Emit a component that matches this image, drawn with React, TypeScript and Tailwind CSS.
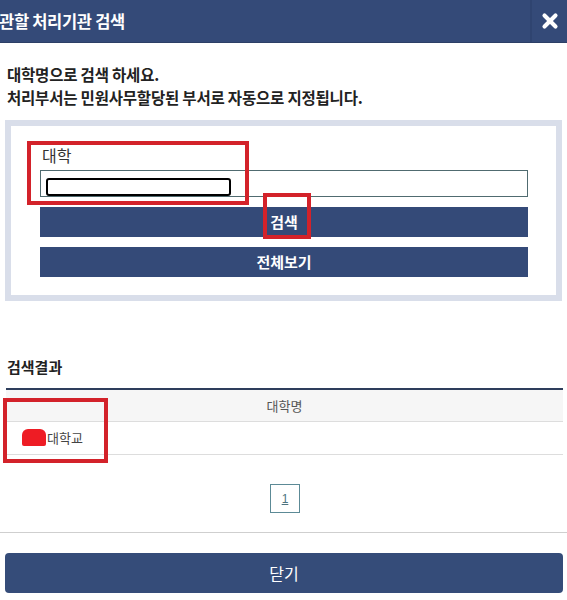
import { X } from 'lucide-react';

export default function App() {
  return (
    <div className="relative w-[567px] h-[600px] bg-white overflow-hidden font-['Noto_Sans_CJK_KR','Noto_Sans',sans-serif] text-[#222]">
      {/* 헤더 */}
      <div className="h-[43px] bg-[#344a78] flex items-center justify-between border-b border-[#2c3f66]">
        <h1 className="text-white text-[16.5px] font-bold tracking-[-0.3px] pl-0 -ml-[1px]">관할 처리기관 검색</h1>
        <div className="h-full flex items-center">
          <div className="h-full w-[2px] bg-[#2f4470]" />
          <button className="w-[35px] h-full flex items-center justify-center text-white">
            <X size={22} strokeWidth={4.5} />
          </button>
        </div>
      </div>

      {/* 안내문 */}
      <div className="pt-[20px] pl-[7px] text-[15.5px] font-bold leading-[23px] tracking-[-0.2px]">
        <p>대학명으로 검색 하세요.</p>
        <p>처리부서는 민원사무할당된 부서로 자동으로 지정됩니다.</p>
      </div>

      {/* 검색 박스 */}
      <div className="ml-[5px] mt-[11px] w-[557px] border-[6px] border-[#d9deea] pl-[29px] pr-[28px] pt-[19px] pb-[18px]">
        <label className="block text-[16px] leading-[20px] text-[#333] pl-[2px]">대학</label>
        <input className="mt-[5px] block w-full h-[27px] border border-[#506b70] outline-none" />
        <button className="mt-[10px] w-full h-[30px] bg-[#344a78] text-white text-[15px] font-bold">검색</button>
        <button className="mt-[10px] w-full h-[30px] bg-[#344a78] text-white text-[15px] font-bold">전체보기</button>
      </div>

      {/* 검색결과 */}
      <h2 className="mt-[56px] pl-[7px] text-[15px] font-bold leading-[20px]">검색결과</h2>
      <div className="ml-[6px] mt-[11px] w-[557px] border-t-2 border-[#2e3e5c]">
        <div className="h-[32px] bg-[#f6f6f6] border-b border-[#dddddd] flex items-center justify-center text-[13px] text-[#555]">
          대학명
        </div>
        <div className="h-[33px] border-b border-[#dddddd] flex items-center pl-[41px] text-[13px] text-[#444]">
          대학교
        </div>
      </div>

      {/* 페이지 */}
      <div className="mt-[29px] flex justify-center pl-[3px]">
        <span className="w-[30px] h-[29px] border border-[#5c8a96] flex items-center justify-center text-[12px] text-[#4d7380] underline font-['Liberation_Sans',sans-serif]">
          1
        </span>
      </div>

      <hr className="mt-[19px] border-t border-[#cfcfcf]" />

      <button className="ml-[5px] mt-[20px] w-[558px] h-[40px] rounded-[4px] bg-[#354c79] text-white text-[16px]">
        닫기
      </button>

      {/* 빨간 표시 */}
      <div className="absolute left-[27px] top-[141px] w-[222px] h-[64px] border-[4px] border-[#d3222a]" />
      <div className="absolute left-[46px] top-[178px] w-[185px] h-[18px] border-2 border-black rounded-[3px] bg-white" />
      <div className="absolute left-[263px] top-[193px] w-[48px] h-[46px] border-[4px] border-[#d3222a]" />
      <div className="absolute left-[3px] top-[398px] w-[105px] h-[65px] border-[4px] border-[#d3222a]" />
      <div className="absolute left-[22px] top-[429px] w-[24px] h-[17px] rounded-t-[6px] rounded-b-[2px] bg-[#ee1c24]" />
    </div>
  );
}
